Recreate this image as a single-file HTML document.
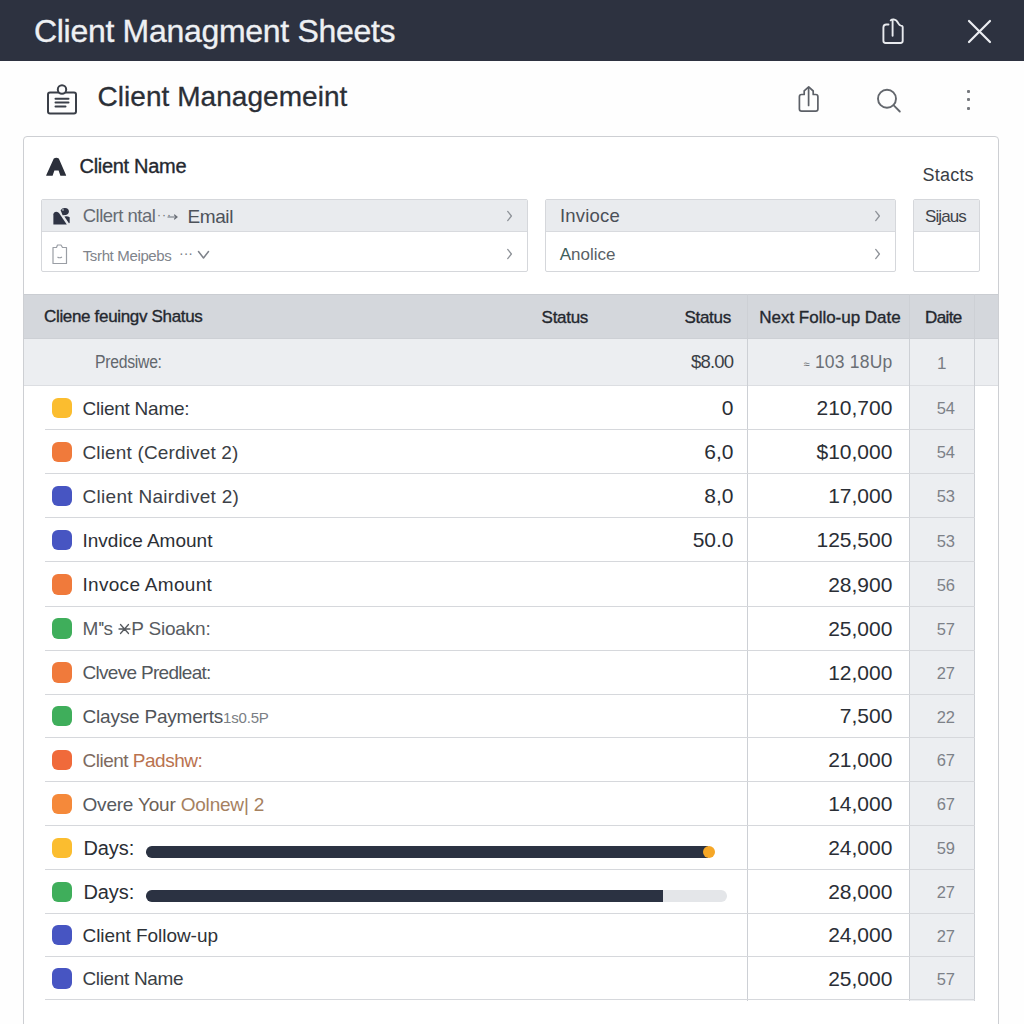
<!DOCTYPE html>
<html><head><meta charset="utf-8">
<style>
*{margin:0;padding:0;box-sizing:border-box}
html,body{width:1024px;height:1024px;overflow:hidden;background:#fefefe;font-family:"Liberation Sans",sans-serif;color:#2a2e35}
.a{position:absolute;white-space:nowrap;line-height:1}
.r{position:absolute}
.med{-webkit-text-stroke:0.35px currentColor}
</style></head><body>
<div class="r" style="left:0;top:0;width:1024px;height:61px;background:#2d3240"></div>
<div class="a " style="left:34.0px;top:15.1px;font-size:32px;color:#eef0f3;letter-spacing:-0.3px;-webkit-text-stroke:0.35px #eef0f3">Client Managment Sheets</div>
<svg class="r" style="left:876px;top:14px" width="34" height="36" viewBox="876 14 34 36" fill="none" stroke="#e8eaee" stroke-width="1.9" stroke-linecap="round" stroke-linejoin="round">
<path d="M888.5 24.5 H886.4 Q883.4 24.5 883.4 27.5 V40.8 Q883.4 43 885.6 43 H900.5 Q902.7 43 902.7 40.8 V27.2 Q902.7 25.6 901 25.6 Q899.4 25.5 898.5 23.6 Q896.5 19.7 893.7 19.4 Q891.8 19.2 890.7 20.3"/>
<path d="M892.6 20.2 V35.8"/>
</svg>
<svg class="r" style="left:964px;top:16px" width="32" height="32" viewBox="964 16 32 32" fill="none" stroke="#eceef2" stroke-width="2.2" stroke-linecap="round">
<path d="M969 21 L990 42 M990 21 L969 42"/>
</svg>
<svg class="r" style="left:44px;top:80px" width="36" height="36" viewBox="44 80 36 36" fill="none" stroke="#3a3f48" stroke-width="2" stroke-linejoin="round" stroke-linecap="round">
<rect x="48" y="92.5" width="28" height="21" rx="2"/>
<circle cx="62" cy="89.5" r="4.2" fill="#fdfdfd"/>
<path d="M55.5 98.8 H68.5 M55.5 102.6 H68.5 M55.5 106.4 H65.5"/>
</svg>
<div class="a " style="left:97.5px;top:83.3px;font-size:28px;color:#2b2f36;letter-spacing:0.05px;-webkit-text-stroke:0.3px #2b2f36">Client Managemeint</div>
<svg class="r" style="left:794px;top:82px" width="30" height="34" viewBox="794 82 30 34" fill="none" stroke="#5c6067" stroke-width="1.7" stroke-linecap="round" stroke-linejoin="round">
<path d="M804.2 94.5 H801.6 Q799.4 94.5 799.4 96.7 V109 Q799.4 111.2 801.6 111.2 H815.7 Q817.9 111.2 817.9 109 V96.7 Q817.9 94.5 815.7 94.5 H813.2 V91 L808.7 86.9 L804.2 90.8 Z"/>
<path d="M808.6 88 V105.4"/>
</svg>
<svg class="r" style="left:872px;top:84px" width="34" height="34" viewBox="872 84 34 34" fill="none" stroke="#63676d" stroke-width="1.9" stroke-linecap="round">
<circle cx="887" cy="98.7" r="9"/>
<path d="M893.5 105.2 L899.8 111.5"/>
</svg>
<div class="r" style="left:967px;top:89.6px;width:3px;height:3px;border-radius:1px;background:#76797e"></div>
<div class="r" style="left:967px;top:97.8px;width:3px;height:3px;border-radius:1px;background:#76797e"></div>
<div class="r" style="left:967px;top:106.6px;width:3px;height:3px;border-radius:1px;background:#76797e"></div>
<div class="r" style="left:23px;top:136px;width:976px;height:920px;border:1.5px solid #cdcfd3;border-radius:4px;background:#fff"></div>
<svg class="r" style="left:44px;top:156px" width="24" height="22" viewBox="44 156 24 22">
<path d="M53.8 158.6 Q56.3 157 58.8 158.6 L66.1 175.2 Q66.3 175.8 65.6 175.8 H60.4 L58.6 170.4 H54.4 L52.6 175.8 H46.6 Q46 175.8 46.2 175.2 Z" fill="#2b2f3a"/>
</svg>
<div class="a med" style="left:79.5px;top:156.0px;font-size:20px;color:#24282f;letter-spacing:-0.3px">Client Name</div>
<div class="a " style="right:50.2px;top:166.1px;font-size:18px;color:#3a3e45;letter-spacing:0.2px">Stacts</div>
<div class="r" style="left:41px;top:199px;width:487px;height:73px;border:1px solid #d5d7db;border-radius:2px;background:#fff;overflow:hidden"><div class="r" style="left:0;top:0;right:0;height:32px;background:#e9ebee;border-bottom:1px solid #d8dade"></div></div>
<div class="r" style="left:545px;top:199px;width:351px;height:73px;border:1px solid #d5d7db;border-radius:2px;background:#fff;overflow:hidden"><div class="r" style="left:0;top:0;right:0;height:32px;background:#e9ebee;border-bottom:1px solid #d8dade"></div></div>
<div class="r" style="left:913px;top:199px;width:67px;height:73px;border:1px solid #d5d7db;border-radius:2px;background:#fff;overflow:hidden"><div class="r" style="left:0;top:0;right:0;height:32px;background:#e9ebee;border-bottom:1px solid #d8dade"></div></div>
<svg class="r" style="left:50px;top:205px" width="24" height="24" viewBox="50 205 24 24">
<path d="M53.4 224.6 V214.2 Q53.6 211.8 56.4 211.7 Q58.2 211.7 59.2 213.2 L66.8 224.6 Z" fill="#2f3444"/>
<path d="M60.6 210.2 Q62.2 207.9 65 208.1 Q68.9 208.4 68.9 211.6 Q68.8 214.6 65.8 214.9 L62.6 215.2 Z" fill="#2f3444"/>
<circle cx="62.9" cy="209.9" r="1.1" fill="#8a8f99"/>
<path d="M64.4 216.5 Q67.2 215.7 69.7 217.2 V222.6 Q69.6 223.4 68.9 223.3 Z" fill="#2f3444"/>
</svg>
<div class="a " style="left:82.7px;top:207.0px;font-size:18.5px;color:#676c73;letter-spacing:-0.5px">Cllert ntal</div>
<div class="a " style="left:157.0px;top:208.8px;font-size:12px;color:#6b7078;">·&#8202;·&#8202;·</div>
<svg class="r" style="left:167px;top:212px" width="12" height="10" viewBox="167 212 12 10" fill="none" stroke="#6b7078" stroke-width="1.2" stroke-linecap="round"><path d="M168 217 H177 M174.5 215 L177 217 L174.5 219"/></svg>
<div class="a " style="left:187.5px;top:206.6px;font-size:19px;color:#4d525a;letter-spacing:-0.4px">Email</div>
<svg class="r" style="left:50px;top:242px" width="22" height="24" viewBox="50 242 22 24" fill="none" stroke="#9a9ea5" stroke-width="1.2" stroke-linejoin="round">
<path d="M53 247.5 H56.5 L57.5 245 H61 L62.5 247.5 H66.5 V263.5 H53 Z"/>
<path d="M57.5 257 Q59.5 258.5 62 257"/>
</svg>
<div class="a " style="left:82.7px;top:248.2px;font-size:15px;color:#80848b;letter-spacing:-0.35px">Tsrht Meipebs</div>
<div class="a " style="left:179.0px;top:246.1px;font-size:14px;color:#7a7e85;">···</div>
<svg class="r" style="left:195px;top:248px" width="16" height="14" viewBox="195 248 16 14" fill="none" stroke="#7e828a" stroke-width="1.5" stroke-linecap="round" stroke-linejoin="round">
<path d="M198.5 251.5 L203.5 258 L208.5 251.5"/>
</svg>
<svg class="r" style="left:505px;top:208px" width="10" height="16" viewBox="505 208 10 16" fill="none" stroke="#8e9298" stroke-width="1.3" stroke-linecap="round" stroke-linejoin="round"><path d="M507.7 211.4 L511.4 216 L507.7 220.6"/></svg>
<svg class="r" style="left:505px;top:246px" width="10" height="16" viewBox="505 246 10 16" fill="none" stroke="#8e9298" stroke-width="1.3" stroke-linecap="round" stroke-linejoin="round"><path d="M507.7 249.4 L511.4 254 L507.7 258.6"/></svg>
<svg class="r" style="left:873px;top:208px" width="10" height="16" viewBox="873 208 10 16" fill="none" stroke="#8e9298" stroke-width="1.3" stroke-linecap="round" stroke-linejoin="round"><path d="M875.7 211.4 L879.4 216 L875.7 220.6"/></svg>
<svg class="r" style="left:873px;top:246px" width="10" height="16" viewBox="873 246 10 16" fill="none" stroke="#8e9298" stroke-width="1.3" stroke-linecap="round" stroke-linejoin="round"><path d="M875.7 249.4 L879.4 254 L875.7 258.6"/></svg>
<div class="a " style="left:560.0px;top:207.1px;font-size:18.5px;color:#4b5058;letter-spacing:0.2px">Invioce</div>
<div class="a " style="left:559.7px;top:246.2px;font-size:17px;color:#5a5f66;letter-spacing:0px"><span style="color:#3e5e5a">A</span>nolice</div>
<div class="a " style="left:925.0px;top:208.3px;font-size:17px;color:#3f434a;letter-spacing:-0.9px">Sijaus</div>
<div class="r" style="left:24px;top:294px;width:974px;height:45px;background:#d4d7dc;border-top:1px solid #cacdd2;border-bottom:1px solid #cdd0d5"></div>
<div class="r" style="left:24px;top:339px;width:974px;height:47px;background:#eceef1;border-bottom:1px solid #dcdee2"></div>
<div class="r" style="left:909px;top:386px;width:66px;height:615px;background:#eceef1"></div>
<div class="r" style="left:747px;top:294px;width:1px;height:707px;background:#cdd0d5"></div>
<div class="r" style="left:909px;top:294px;width:1px;height:707px;background:#cdd0d5"></div>
<div class="r" style="left:974px;top:294px;width:1px;height:707px;background:#cdd0d5"></div>
<div class="a med" style="left:44.0px;top:308.4px;font-size:17px;color:#24282f;letter-spacing:-0.33px">Cliene feuingv Shatus</div>
<div class="a med" style="left:541.6px;top:308.6px;font-size:17px;color:#24282f;letter-spacing:-0.3px">Status</div>
<div class="a med" style="right:293.1px;top:308.6px;font-size:17px;color:#24282f;letter-spacing:-0.3px">Status</div>
<div class="a med" style="left:759.3px;top:308.8px;font-size:17px;color:#24282f;letter-spacing:-0.02px">Next Follo-up Date</div>
<div class="a med" style="left:925.0px;top:308.8px;font-size:17px;color:#24282f;letter-spacing:-0.6px">Daite</div>
<div class="a " style="left:95.3px;top:353.8px;font-size:17.5px;color:#62676d;letter-spacing:-0.3px;transform:scaleX(0.9);transform-origin:0 0">Predsiwe:</div>
<div class="a " style="right:290.7px;top:352.5px;font-size:18.5px;color:#3a3e45;letter-spacing:-0.8px">$8.00</div>
<div class="a " style="right:131.6px;top:354.0px;font-size:17.5px;color:#6a6e75;letter-spacing:0.2px"><span style="font-size:11px">≈</span> 103 18Up</div>
<div class="a " style="right:77.5px;top:354.6px;font-size:17px;color:#7a7e85;">1</div>
<div class="r" style="left:45px;top:429px;width:930px;height:1px;background:#d6d8dc"></div>
<div class="r" style="left:51.8px;top:397.8px;width:20.4px;height:20.4px;border-radius:6px;background:#fbbd2f"></div>
<div class="a " style="left:82.5px;top:398.6px;font-size:19px;color:#33373d;letter-spacing:-0.25px">Client Name:</div>
<div class="a " style="right:290.5px;top:397.1px;font-size:21px;color:#2a2e35;">0</div>
<div class="a " style="right:131.6px;top:397.1px;font-size:21px;color:#2a2e35;">210,700</div>
<div class="a " style="right:69.4px;top:400.3px;font-size:16.5px;color:#7d8188;letter-spacing:-0.3px">54</div>
<div class="r" style="left:45px;top:473px;width:930px;height:1px;background:#d6d8dc"></div>
<div class="r" style="left:51.8px;top:441.9px;width:20.4px;height:20.4px;border-radius:6px;background:#f07a3b"></div>
<div class="a " style="left:82.5px;top:442.7px;font-size:19px;color:#3a3e44;letter-spacing:0.15px">Client (Cerdivet 2)</div>
<div class="a " style="right:290.5px;top:441.2px;font-size:21px;color:#2a2e35;">6,0</div>
<div class="a " style="right:131.6px;top:441.2px;font-size:21px;color:#2a2e35;">$10,000</div>
<div class="a " style="right:69.4px;top:444.4px;font-size:16.5px;color:#7d8188;letter-spacing:-0.3px">54</div>
<div class="r" style="left:45px;top:517px;width:930px;height:1px;background:#d6d8dc"></div>
<div class="r" style="left:51.8px;top:485.9px;width:20.4px;height:20.4px;border-radius:6px;background:#4755c2"></div>
<div class="a " style="left:82.5px;top:486.7px;font-size:19px;color:#3d4147;letter-spacing:0.3px">Client Nairdivet 2)</div>
<div class="a " style="right:290.5px;top:485.3px;font-size:21px;color:#2a2e35;">8,0</div>
<div class="a " style="right:131.6px;top:485.3px;font-size:21px;color:#2a2e35;">17,000</div>
<div class="a " style="right:69.4px;top:488.4px;font-size:16.5px;color:#7d8188;letter-spacing:-0.3px">53</div>
<div class="r" style="left:45px;top:561px;width:930px;height:1px;background:#d6d8dc"></div>
<div class="r" style="left:51.8px;top:530.0px;width:20.4px;height:20.4px;border-radius:6px;background:#4755c2"></div>
<div class="a " style="left:82.5px;top:530.9px;font-size:19px;color:#2c3036;letter-spacing:0.0px">Invdice Amount</div>
<div class="a " style="right:290.5px;top:529.4px;font-size:21px;color:#2a2e35;">50.0</div>
<div class="a " style="right:131.6px;top:529.4px;font-size:21px;color:#2a2e35;">125,500</div>
<div class="a " style="right:69.4px;top:532.6px;font-size:16.5px;color:#7d8188;letter-spacing:-0.3px">53</div>
<div class="r" style="left:45px;top:606px;width:930px;height:1px;background:#d6d8dc"></div>
<div class="r" style="left:51.8px;top:574.2px;width:20.4px;height:20.4px;border-radius:6px;background:#f07a3b"></div>
<div class="a " style="left:82.5px;top:575.0px;font-size:19px;color:#2c3036;letter-spacing:0.3px">Invoce Amount</div>
<div class="a " style="right:131.6px;top:573.6px;font-size:21px;color:#2a2e35;">28,900</div>
<div class="a " style="right:69.4px;top:576.7px;font-size:16.5px;color:#7d8188;letter-spacing:-0.3px">56</div>
<div class="r" style="left:45px;top:650px;width:930px;height:1px;background:#d6d8dc"></div>
<div class="r" style="left:51.8px;top:618.3px;width:20.4px;height:20.4px;border-radius:6px;background:#3fae5b"></div>
<div class="a " style="left:82.5px;top:619.1px;font-size:19px;color:#585c61;letter-spacing:-0.2px">M<span style="letter-spacing:-1px">''</span>s <svg width="13" height="12" viewBox="0 0 13 12" style="vertical-align:0px;margin-right:0.5px" fill="none" stroke="#55595e" stroke-width="1.3" stroke-linecap="round"><path d="M2.5 1.5 L10.5 10.5 M10.5 1.5 L2.5 10.5 M1 6 H12"/></svg>P Sioakn:</div>
<div class="a " style="right:131.6px;top:617.7px;font-size:21px;color:#2a2e35;">25,000</div>
<div class="a " style="right:69.4px;top:620.8px;font-size:16.5px;color:#7d8188;letter-spacing:-0.3px">57</div>
<div class="r" style="left:45px;top:694px;width:930px;height:1px;background:#d6d8dc"></div>
<div class="r" style="left:51.8px;top:662.3px;width:20.4px;height:20.4px;border-radius:6px;background:#f07a3b"></div>
<div class="a " style="left:82.5px;top:663.2px;font-size:19px;color:#53575c;letter-spacing:-0.7px">Clveve Predleat:</div>
<div class="a " style="right:131.6px;top:661.7px;font-size:21px;color:#2a2e35;">12,000</div>
<div class="a " style="right:69.4px;top:664.9px;font-size:16.5px;color:#7d8188;letter-spacing:-0.3px">27</div>
<div class="r" style="left:45px;top:737px;width:930px;height:1px;background:#d6d8dc"></div>
<div class="r" style="left:51.8px;top:706.0px;width:20.4px;height:20.4px;border-radius:6px;background:#3fae5b"></div>
<div class="a " style="left:82.5px;top:706.8px;font-size:19px;color:#505459;letter-spacing:-0.2px">Clayse Paymerts<span style="font-size:15px;color:#7a7e84">1s0.5P</span></div>
<div class="a " style="right:131.6px;top:705.4px;font-size:21px;color:#2a2e35;">7,500</div>
<div class="a " style="right:69.4px;top:708.5px;font-size:16.5px;color:#7d8188;letter-spacing:-0.3px">22</div>
<div class="r" style="left:45px;top:781px;width:930px;height:1px;background:#d6d8dc"></div>
<div class="r" style="left:51.8px;top:749.6px;width:20.4px;height:20.4px;border-radius:6px;background:#f06a3a"></div>
<div class="a " style="left:82.5px;top:750.5px;font-size:19px;color:#2f3339;letter-spacing:-0.5px"><span style="color:#7d6a60">Client</span> <span style="color:#b9724f">Padshw:</span></div>
<div class="a " style="right:131.6px;top:749.0px;font-size:21px;color:#2a2e35;">21,000</div>
<div class="a " style="right:69.4px;top:752.2px;font-size:16.5px;color:#7d8188;letter-spacing:-0.3px">67</div>
<div class="r" style="left:45px;top:825px;width:930px;height:1px;background:#d6d8dc"></div>
<div class="r" style="left:51.8px;top:793.8px;width:20.4px;height:20.4px;border-radius:6px;background:#f5893a"></div>
<div class="a " style="left:82.5px;top:794.6px;font-size:19px;color:#55595e;letter-spacing:-0.2px">Overe <span style="color:#6d6156">Your</span> <span style="color:#a6815f">Oolnew| 2</span></div>
<div class="a " style="right:131.6px;top:793.1px;font-size:21px;color:#2a2e35;">14,000</div>
<div class="a " style="right:69.4px;top:796.3px;font-size:16.5px;color:#7d8188;letter-spacing:-0.3px">67</div>
<div class="r" style="left:45px;top:869px;width:930px;height:1px;background:#d6d8dc"></div>
<div class="r" style="left:51.8px;top:837.8px;width:20.4px;height:20.4px;border-radius:6px;background:#fbbd2f"></div>
<div class="a " style="left:83.5px;top:838.4px;font-size:20px;color:#2a2e35;letter-spacing:-0.1px">Days:</div>
<div class="a " style="right:131.6px;top:837.1px;font-size:21px;color:#2a2e35;">24,000</div>
<div class="a " style="right:69.4px;top:840.3px;font-size:16.5px;color:#7d8188;letter-spacing:-0.3px">59</div>
<div class="r" style="left:45px;top:913px;width:930px;height:1px;background:#d6d8dc"></div>
<div class="r" style="left:51.8px;top:881.6px;width:20.4px;height:20.4px;border-radius:6px;background:#3fae5b"></div>
<div class="a " style="left:83.5px;top:882.3px;font-size:20px;color:#2a2e35;letter-spacing:-0.1px">Days:</div>
<div class="a " style="right:131.6px;top:881.0px;font-size:21px;color:#2a2e35;">28,000</div>
<div class="a " style="right:69.4px;top:884.1px;font-size:16.5px;color:#7d8188;letter-spacing:-0.3px">27</div>
<div class="r" style="left:45px;top:956px;width:930px;height:1px;background:#d6d8dc"></div>
<div class="r" style="left:51.8px;top:925.0px;width:20.4px;height:20.4px;border-radius:6px;background:#4755c2"></div>
<div class="a " style="left:82.5px;top:925.9px;font-size:19px;color:#2e3238;letter-spacing:-0.05px">Client Follow-up</div>
<div class="a " style="right:131.6px;top:924.4px;font-size:21px;color:#2a2e35;">24,000</div>
<div class="a " style="right:69.4px;top:927.6px;font-size:16.5px;color:#7d8188;letter-spacing:-0.3px">27</div>
<div class="r" style="left:45px;top:999px;width:930px;height:1px;background:#d6d8dc"></div>
<div class="r" style="left:51.8px;top:968.2px;width:20.4px;height:20.4px;border-radius:6px;background:#4755c2"></div>
<div class="a " style="left:82.5px;top:969.1px;font-size:19px;color:#3b3f45;letter-spacing:-0.35px">Client Name</div>
<div class="a " style="right:131.6px;top:967.6px;font-size:21px;color:#2a2e35;">25,000</div>
<div class="a " style="right:69.4px;top:970.8px;font-size:16.5px;color:#7d8188;letter-spacing:-0.3px">57</div>
<div class="r" style="left:145.5px;top:846.4px;width:562px;height:11.6px;border-radius:5.8px 0 0 5.8px;background:#2b3242"></div>
<div class="r" style="left:703px;top:846.2px;width:12px;height:12px;border-radius:50%;background:#f6a726"></div>
<div class="r" style="left:145.5px;top:890.4px;width:581px;height:11.6px;border-radius:5.8px;background:#e4e6e9;overflow:hidden"><div class="r" style="left:0;top:0;width:517.5px;height:11.6px;background:#2b3242"></div></div>
</body></html>
